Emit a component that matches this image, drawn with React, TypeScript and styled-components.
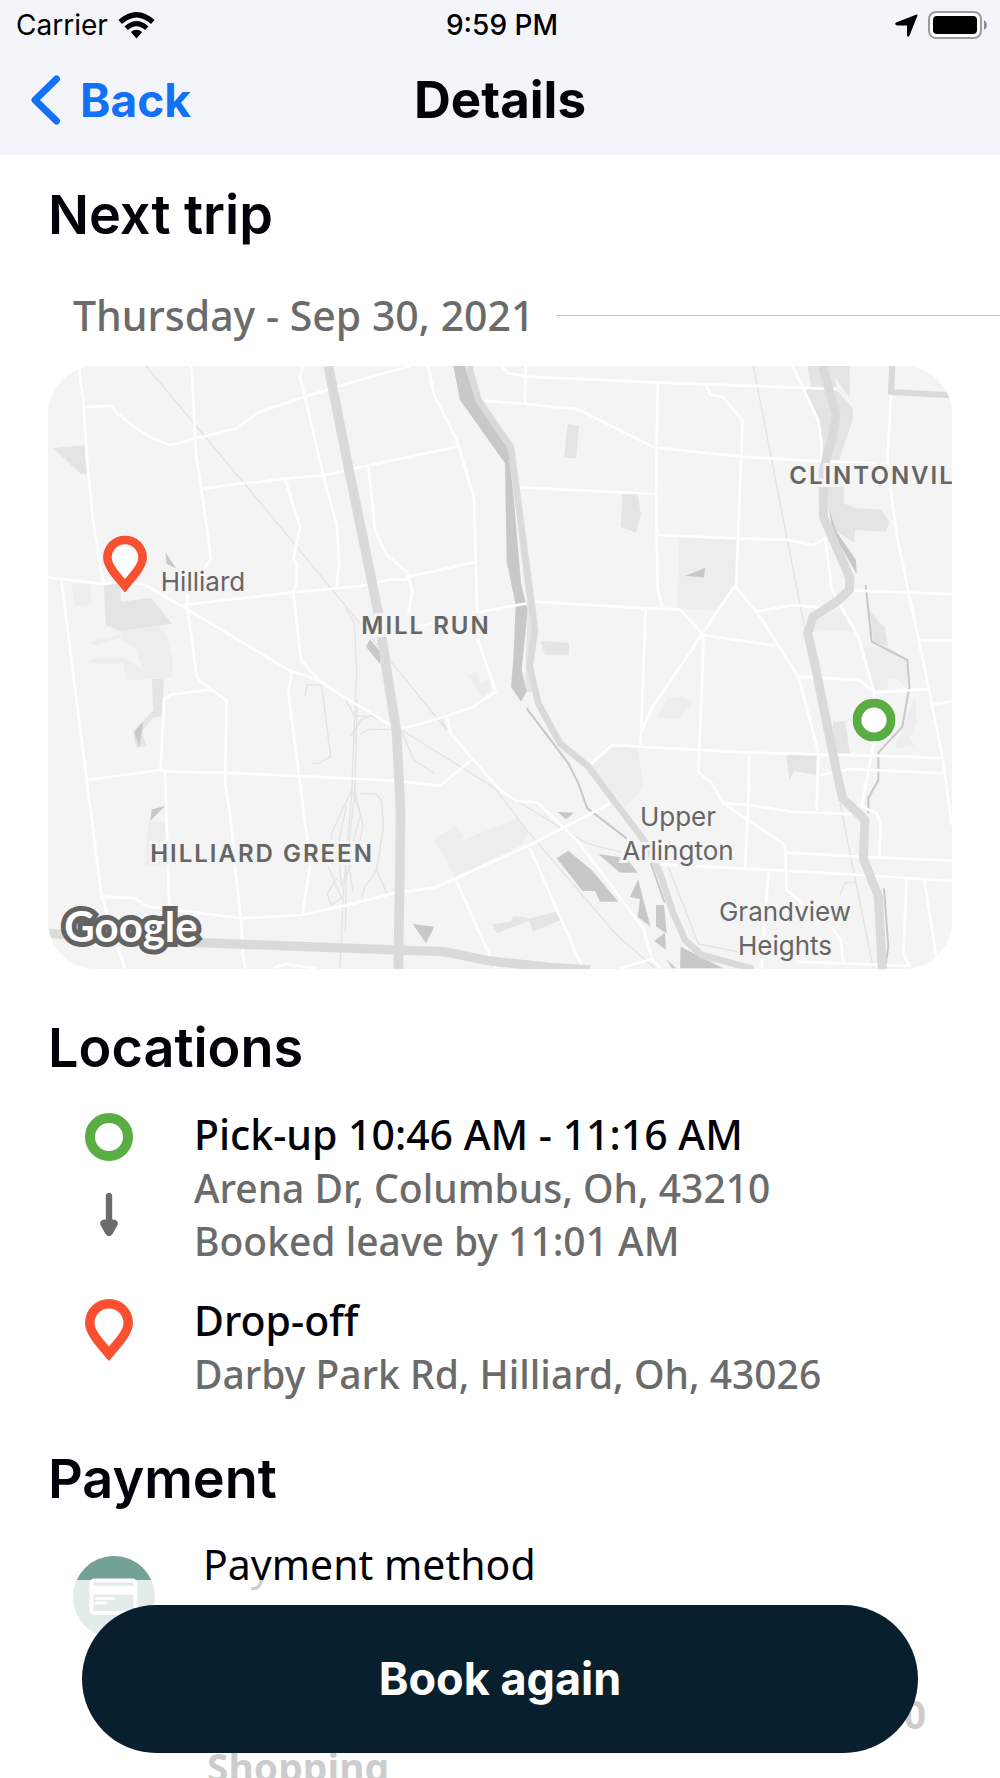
import React from "react";
import styled, { createGlobalStyle } from "styled-components";

const GlobalStyle = createGlobalStyle`
  * { box-sizing: border-box; }
  body { margin: 0; background: #fff; color: #020208; font-family: "Noto Sans", "Open Sans", sans-serif; }
  h1, h2, h3, p { margin: 0; }
`;

const system = `Inter, "Liberation Sans", sans-serif`;

const Screen = styled.div`
  position: relative;
  display: flex;
  flex-direction: column;
  height: 100vh;
  overflow: hidden;
`;

const TopBar = styled.header`
  flex: none;
  padding-bottom: 20px;
  background: #f4f5fb;
  font-family: ${system};
`;

const StatusBar = styled.div`
  display: grid;
  grid-template-columns: 1fr auto 1fr;
  align-items: center;
  height: 50px;
  padding: 0 12px 0 16px;
  color: #000;
  font-size: 28px;
`;

const StatusGroup = styled.div<{ $end?: boolean }>`
  display: flex;
  align-items: center;
  justify-content: ${(p) => (p.$end ? "flex-end" : "flex-start")};
  gap: 10px;
`;

const Clock = styled.time`
  font-weight: 500;
`;

const NavBar = styled.nav`
  display: grid;
  grid-template-columns: 1fr auto 1fr;
  align-items: center;
  height: 85px;
  padding: 14px 30px 0;
`;

const BackButton = styled.button`
  display: flex;
  align-items: center;
  justify-self: start;
  gap: 18px;
  padding: 0;
  border: 0;
  background: none;
  color: #1371f5;
  font: 700 46px/52px ${system};
`;

const Title = styled.h1`
  font-size: 51px;
  font-weight: 700;
  line-height: 52px;
`;

const Content = styled.main`
  flex: 1;
  min-height: 0;
  overflow-y: auto;
  scrollbar-width: none;
  padding: 26px 48px 0;
`;

const Section = styled.section`
  margin-bottom: 45px;
`;

const Heading = styled.h2`
  font: 600 54px/68px ${system};
`;

const DateRow = styled.div`
  display: flex;
  align-items: center;
  gap: 22px;
  margin: 36px -48px 21px 25px;
  color: #6b6b6b;
  font-size: 41px;
  font-weight: 500;
  line-height: 60px;
`;

const Rule = styled.hr`
  flex: 1;
  margin: 0;
  border: 0;
  border-top: 1px solid #c8c8c8;
`;

const MapCard = styled.div`
  position: relative;
  aspect-ratio: 904 / 603;
  overflow: hidden;
  border-radius: 48px;
  background: #f4f4f4;
`;

const MapDrawing = styled.svg`
  display: block;
  width: 100%;
  height: 100%;
`;

const MapPoint = styled.div<{ $x: number; $y: number }>`
  position: absolute;
  left: ${(p) => (p.$x / 904) * 100}%;
  top: ${(p) => (p.$y / 603) * 100}%;
  transform: translate(-50%, -50%);
  line-height: 0;
`;

const Place = styled(MapPoint)<{ $district?: boolean }>`
  color: #666;
  font-family: ${system};
  font-size: ${(p) => (p.$district ? 24 : 26)}px;
  font-weight: ${(p) => (p.$district ? 600 : 400)};
  letter-spacing: ${(p) => (p.$district ? 2 : 0)}px;
  line-height: 34px;
  text-align: center;
  white-space: nowrap;
  -webkit-text-stroke: 6px #f4f4f4;
  paint-order: stroke fill;
`;

const MapBrand = styled(MapPoint)`
  color: #fff;
  font: 700 42px/48px Lato, sans-serif;
  -webkit-text-stroke: 10px #636363;
  paint-order: stroke fill;
`;

const Stops = styled.ol`
  display: flex;
  flex-direction: column;
  gap: 27px;
  margin: 26px 0 0;
  padding: 0;
  list-style: none;
`;

const Stop = styled.li`
  display: grid;
  grid-template-columns: 48px 1fr;
  column-gap: 61px;
  padding-left: 37px;
`;

const StopIcons = styled.div`
  display: flex;
  flex-direction: column;
  align-items: center;
  gap: 32px;
  padding-top: 5px;
  line-height: 0;
`;

const StopTitle = styled.h3`
  font-size: 41px;
  font-weight: 500;
  line-height: 53px;
`;

const StopText = styled.p`
  color: #6b6b6b;
  font-size: 39px;
  font-weight: 500;
  line-height: 53px;
`;

const PaymentRow = styled.div`
  display: grid;
  grid-template-columns: 82px 1fr;
  column-gap: 48px;
  margin-top: 25px;
  padding: 0 26px 0 25px;
`;

const PaymentIcon = styled.svg`
  margin-top: 18px;
`;

const PaymentInfo = styled.div`
  font-size: 39px;
  line-height: 53px;
`;

const Method = styled.p`
  font-size: 41px;
`;

const Amount = styled.p`
  margin-top: 96px;
  font-weight: 700;
  text-align: right;
`;

const Purpose = styled.p`
  padding-left: 4px;
  font-weight: 700;
`;

const ActionBar = styled.footer`
  position: absolute;
  inset: auto 0 0;
  padding: 25px 82px;
  background: rgba(255, 255, 255, 0.8);
`;

const BookButton = styled.button`
  display: block;
  width: 100%;
  height: 148px;
  border: 0;
  border-radius: 74px;
  background: #081f2e;
  color: #fff;
  font: 700 45px/52px ${system};
`;

const WifiIcon = () => (
  <svg width="37" height="28" viewBox="0 0 37 28" aria-hidden="true">
    <path d="M0.500 9Q18.500-7 36.500 9L33 13Q18.500 0 4 13Z" />
    <path d="M6.500 15.500Q18.500 4.500 30.500 15.500L27 19Q18.500 11.500 10 19Z" />
    <path d="M12.800 21Q18.500 16.500 24.200 21L18.500 27.500Z" />
  </svg>
);

const LocationArrow = () => (
  <svg width="23" height="23" viewBox="0 0 23 23" aria-hidden="true">
    <path d="M1 8.500 21 .700Q23 0 22.300 2L14.500 21.500Q12.700 24 12 21.500V11.500H2Q-1 10.500 1 8.500Z" />
  </svg>
);

const BatteryIcon = () => (
  <svg width="60" height="28" viewBox="0 0 60 28" aria-hidden="true">
    <rect x="1" y="1" width="52" height="26" rx="7" fill="#fff" stroke="#9b9ba0" strokeWidth="2" />
    <rect x="5" y="5" width="44" height="18" rx="4" />
    <path d="M56 9Q59 11 59 14T56 19Z" fill="#8b8b90" />
  </svg>
);

const BackArrow = () => (
  <svg width="32" height="50" viewBox="0 0 32 50" fill="none" stroke="currentColor" strokeWidth="7" strokeLinecap="round" strokeLinejoin="round" aria-hidden="true">
    <path d="M26.500 4 5 25 26.500 46" />
  </svg>
);

const PickupMark = ({ size = 48 }: { size?: number }) => (
  <svg width={size} height={size} viewBox="0 0 48 48" aria-hidden="true">
    <circle cx="24" cy="24" r="19" fill="#fff" stroke="#5aad42" strokeWidth="10" />
  </svg>
);

const DropoffMark = ({ size = 48 }: { size?: number }) => (
  <svg width={size} height={(size * 62) / 48} viewBox="0 0 48 62" aria-hidden="true">
    <path d="M24 62C14 50 0 36 0 24a24 24 0 0 1 48 0C48 36 34 50 24 62Z" fill="#f85030" />
    <path d="M24 47.500C17 39 9.500 31 9.500 24a14.500 14.500 0 0 1 29 0C38.500 31 31 39 24 47.500Z" fill="#fff" />
  </svg>
);

const DownArrow = () => (
  <svg width="20" height="44" viewBox="0 0 20 44" fill="#6b6b6b" aria-hidden="true">
    <path d="M6.800 3a3.200 3.200 0 0 1 6.400 0V26.500H14C18.500 26.500 20 30 18 33L13.500 41Q10 45.500 6.500 41L2 33C0 30 1.500 26.500 6 26.500H6.800Z" />
  </svg>
);

const lightAreas = [
  "71,654 128,654 131,717 81,720",
  "126,827 216,807 216,817 141,840",
  "216,794 331,779 351,797 373,872 373,934 236,944 226,892 106,892 146,877 226,877",
  "301,1367 354,1370 356,1502 291,1497",
  "1894,512 2066,522 2064,665 2051,672 2011,734 1886,727",
  "2381,720 2416,797 2296,790 2311,762",
  "2446,844 2526,844 2576,882 2576,967 2546,937 2521,942 2516,972 2476,972",
  "2601,987 2606,1067 2586,1112 2599,1140 2541,1147 2571,1072",
  "1856,1000 1906,989 1933,1009 1896,1059 1826,1054",
  "1628,1197 1693,1142 1768,1144 1788,1262 1731,1322",
  "1156,1417 1224,1382 1246,1407 1231,1427 1411,1357 1441,1397 1421,1437 1221,1532",
  "1256,927 1286,917 1298,952 1324,939 1328,972 1303,994",
];

const parks = [
  "16,247 113,237 123,324 98,324",
  "168,657 216,652 219,707 309,696 373,774 216,794 173,777",
  "311,940 348,937 341,1052 316,1054 281,1097 296,1140 264,1145 256,1097 316,1032",
  "1559,175 1593,180 1584,276 1548,276",
  "1724,384 1769,384 1779,447 1763,500 1718,482",
  "1478,825 1563,830 1563,866 1491,866",
  "2278,0 2404,0 2406,97 2361,32 2366,72 2414,127 2416,157 2373,282 2321,282 2321,222 2311,164 2273,74 2291,62",
  "2336,362 2388,360 2388,412 2416,425 2499,432 2524,469 2514,497 2421,492 2419,530 2366,497 2341,422",
  "2464,732 2511,787 2521,844 2476,827",
  "2356,1069 2391,1065 2406,1162 2346,1162",
  "2214,1165 2306,1170 2304,1227 2238,1215 2224,1244",
  "1331,1675 1389,1667 1396,1649 1446,1657 1523,1637 1536,1662 1456,1697 1444,1664 1348,1702",
  "1406,452 1461,792 1446,912 1454,975 1430,980 1439,732",
];

const water = [
  "1216,0 1251,0 1281,97 1381,250 1396,382 1419,652 1439,732 1421,912 1436,977 1419,1007 1389,962 1396,882 1403,717 1376,587 1371,292 1236,102",
  "1526,1477 1561,1454 1631,1512 1711,1607 1656,1607 1641,1575 1604,1575",
  "1651,1464 1736,1477 1769,1520 1716,1520",
  "1771,1540 1786,1602 1808,1682 1769,1652 1776,1600 1746,1592",
  "1824,1617 1848,1617 1856,1702 1824,1682",
  "1851,1700 1854,1752 1819,1725",
  "1528,1337 1578,1340 1554,1360",
  "1094,1674 1159,1682 1134,1732",
  "1898,1742 1966,1777 2026,1807 1896,1807",
  "1856,1779 1884,1807 1871,1807",
  "966,820 1001,862 996,894 954,842",
  "352,559 384,607 356,594",
  "1911,630 1971,606 1968,634",
  "2341,422 2366,497 2424,582 2426,625 2356,502",
  "286,1067 274,1142 258,1097",
  "311,1330 352,1320 306,1365",
];

const streams = [
  "1436,1027 1561,1192 1590,1250 1618,1327 1736,1417",
  "2453,657 2471,827 2578,882 2584,962 2563,1082 2491,1160 2491,1242 2461,1297 2461,1342",
  "2508,1567 2521,1742 2511,1807",
  "1808,1490 1850,1610",
];

const rails = [
  "294,0 676,457 926,760 1196,1092",
  "891,722 919,772 926,912 921,1030 911,1282 886,1582 876,1807",
  "928,1000 920,1282 895,1500 892,1700",
  "1061,1092 1341,1267 1436,1392 1706,1707 1821,1807",
  "1361,1277 1616,1432 1721,1459",
  "2116,0 2271,792",
  "2376,1312 2476,1807",
  "1861,1502 1951,1734 2076,1759",
  "2376,1587 2392,1549 2424,1549",
  "771,992 776,957 821,957 848,1172 811,1192 791,1192",
  "851,1422 851,1402 911,1272 938,1345 900,1480 915,1580",
  "841,1502 881,1597 848,1617 838,1582 866,1537",
  "895,1320 870,1440 880,1560 930,1450 945,1380 920,1270",
  "936,1282 986,1284 1001,1307 1006,1382 986,1512 951,1562 941,1597",
  "986,1512 1016,1582",
  "891,1000 921,1050 966,1050 1006,1062",
  "936,1102 966,1090 1026,1090",
  "908,1112 940,1060 970,1050",
  "1061,1092 1096,1182 1161,1222",
  "1196,1092 1180,1060",
];

const roads = [
  "94,0 98,52 106,102 116,272 136,472 166,654",
  "106,124 188,119 211,145 251,177 309,215 368,237 444,217 566,187 631,139 771,92 906,50 1086,0",
  "431,0 438,142 444,267 466,412 489,579 471,604",
  "461,369 581,352 631,349 716,337 821,329 891,315 921,307 1228,242",
  "764,0 756,37 771,92 826,329 866,477 873,587 866,662",
  "711,339 756,482 736,579 746,592 746,647 736,679 759,882 811,940",
  "0,634 166,654 231,647 286,654 396,717 418,730 721,912 806,940 906,1004 1036,1082",
  "406,717 736,679 936,660 1036,639 1071,642 1090,630 1278,589",
  "41,647 74,912 116,1242 161,1592 195,1700 231,1807",
  "418,685 418,730 444,912 444,927 461,950 536,1004 531,1247 548,1362 561,1502 579,1657 583,1752 591,1807",
  "491,970 371,985 348,1000 338,1212",
  "116,1242 338,1212 351,1217 526,1220 751,1230 936,1239 1036,1244 1176,1259 1274,1179",
  "351,1217 364,1627",
  "731,915 721,980 778,1422 786,1502 763,1647",
  "161,1592 256,1596 301,1622 426,1637 579,1657 763,1647 906,1615 1036,1582 1161,1565 1446,1437 1686,1312",
  "676,1807 711,1794 806,1807",
  "1141,0 1158,87 1228,227 1278,397 1283,589 1291,827 1321,912 1343,977 1276,1022 1196,1050 1061,1090",
  "961,302 981,492 1016,567 1076,617 1093,672 1081,747",
  "1111,782 1231,750 1436,712",
  "1361,0 1381,22 1436,32 1836,50 2366,69",
  "1433,0 1431,112",
  "1306,104 1436,114 1591,130 1821,245 2081,272 2316,286 2526,294",
  "1416,364 1821,384",
  "1829,52 1824,384 1829,667 1843,724",
  "1829,507 2071,517 2221,522 2296,538 2331,517",
  "1461,707 1796,727 1896,730 1966,807 2181,839",
  "1793,730 1786,912 1778,1137",
  "1974,57 1988,87 2024,92 2084,164 2064,665",
  "2234,0 2311,164 2321,232 2318,286",
  "2529,82 2518,292 2546,507 2631,912 2684,1177 2711,1377",
  "2416,674 2711,684",
  "1778,1102 1811,1027 1906,888 2056,665 2064,665 2126,737 2251,932 2311,1157 2306,1332",
  "1966,807 1964,912 1951,1217 1991,1252 2026,1312 2211,1437 2216,1572 2266,1614",
  "2126,737 2236,717 2316,724",
  "2331,512 2351,667 2376,717 2431,812 2478,977 2478,1127 2441,1322 2486,1342 2498,1372 2494,1472",
  "2616,824 2711,824",
  "2251,932 2434,942 2481,979 2641,969",
  "2656,1014 2711,1007",
  "1626,1197 1693,1137 1866,1147 2106,1160 2316,1165 2576,1172 2684,1177",
  "2316,1227 2406,1209 2686,1222",
  "2104,1162 2101,1312 2091,1504",
  "2026,1312 2101,1316 2226,1337 2411,1344",
  "2211,1459 2431,1472 2711,1484",
  "1836,1494 1936,1500 2211,1514 2436,1527 2711,1545",
  "2161,1517 2141,1807",
  "2576,1537 2566,1767 2586,1802",
  "2629,1542 2666,1777",
  "2246,1787 2586,1800",
  "2346,1677 2378,1722 2386,1792",
  "1196,1050 1206,1100 1356,1272 1406,1305 1468,1309 1586,1422 1786,1687 1811,1777 1836,1807",
  "1446,1447 1601,1800",
  "1221,1537 1343,1807",
  "1716,1807 1811,1779",
];

const highways = [
  { width: 29, points: "841,0 906,327 991,742 1016,912 1046,1102 1058,1342 1051,1809" },
  { width: 20, points: "1263,0 1291,102 1389,244 1461,792 1445,900 1471,1012 1536,1132 1621,1202 1791,1427 1836,1522 1876,1642 1911,1722 1961,1767 2116,1809" },
  { width: 27, points: "2324,0 2364,147 2351,222 2326,312 2326,452 2406,637 2404,672 2366,707 2296,752 2279,802 2298,882 2371,1242 2384,1297 2451,1362 2446,1477 2491,1592 2503,1809" },
  { width: 28, points: "0,1702 376,1727 936,1748 1186,1757 1326,1785 1506,1804 1626,1812" },
  { width: 18, points: "2533,0 2529,78 2710,88" },
];

const Streets = () => (
  <MapDrawing viewBox="0 0 2712 1809" preserveAspectRatio="xMidYMid slice" role="img" aria-label="Trip map">
    <g fill="#ededed">{lightAreas.map((p) => <polygon key={p} points={p} />)}</g>
    <polygon fill="#f4f4f4" points="206,815 261,847 286,912 311,925 276,905 232,877 150,870" />
    <g fill="#e4e4e4">{parks.map((p) => <polygon key={p} points={p} />)}</g>
    <g fill="#c8c8c8">{water.map((p) => <polygon key={p} points={p} />)}</g>
    <g fill="none" stroke="#c8c8c8" strokeWidth="6">{streams.map((p) => <polyline key={p} points={p} />)}</g>
    <g fill="none" stroke="#e3e3e3" strokeWidth="4">{rails.map((p) => <polyline key={p} points={p} />)}</g>
    <g fill="none" stroke="#fff" strokeWidth="8" strokeLinejoin="round">{roads.map((p) => <polyline key={p} points={p} />)}</g>
    <g fill="none" stroke="#dadada" strokeLinejoin="round">
      {highways.map((h) => <polyline key={h.points} points={h.points} strokeWidth={h.width} />)}
    </g>
  </MapDrawing>
);

export default function App() {
  return (
    <Screen>
      <GlobalStyle />
      <TopBar>
        <StatusBar>
          <StatusGroup>
            <span>Carrier</span>
            <WifiIcon />
          </StatusGroup>
          <Clock>9:59 PM</Clock>
          <StatusGroup $end>
            <LocationArrow />
            <BatteryIcon />
          </StatusGroup>
        </StatusBar>
        <NavBar>
          <BackButton type="button">
            <BackArrow />
            Back
          </BackButton>
          <Title>Details</Title>
        </NavBar>
      </TopBar>

      <Content>
        <Section>
          <Heading>Next trip</Heading>
          <DateRow>
            <span>Thursday - Sep 30, 2021</span>
            <Rule />
          </DateRow>
          <MapCard>
            <Streets />
            <Place $x={155} $y={216}>Hilliard</Place>
            <Place $x={378} $y={260} $district>MILL RUN</Place>
            <Place $x={824} $y={110} $district>CLINTONVIL</Place>
            <Place $x={214} $y={488} $district>HILLIARD GREEN</Place>
            <Place $x={630} $y={468}>Upper<br />Arlington</Place>
            <Place $x={737} $y={563}>Grandview<br />Heights</Place>
            <MapBrand $x={83} $y={560}>Google</MapBrand>
            <MapPoint $x={77} $y={198}><DropoffMark size={44} /></MapPoint>
            <MapPoint $x={826} $y={354}><PickupMark size={43} /></MapPoint>
          </MapCard>
        </Section>

        <Section>
          <Heading>Locations</Heading>
          <Stops>
            <Stop>
              <StopIcons>
                <PickupMark />
                <DownArrow />
              </StopIcons>
              <div>
                <StopTitle>Pick-up 10:46 AM - 11:16 AM</StopTitle>
                <StopText>Arena Dr, Columbus, Oh, 43210</StopText>
                <StopText>Booked leave by 11:01 AM</StopText>
              </div>
            </Stop>
            <Stop>
              <StopIcons>
                <DropoffMark />
              </StopIcons>
              <div>
                <StopTitle>Drop-off</StopTitle>
                <StopText>Darby Park Rd, Hilliard, Oh, 43026</StopText>
              </div>
            </Stop>
          </Stops>
        </Section>

        <Section>
          <Heading>Payment</Heading>
          <PaymentRow>
            <PaymentIcon width="82" height="82" viewBox="0 0 82 82" aria-hidden="true">
              <circle cx="41" cy="41" r="41" fill="#73a196" />
              <rect x="18.500" y="24.500" width="44" height="32.500" rx="3" fill="none" stroke="#fff" strokeWidth="4" />
              <path d="M18 30H63V38.500H18Z" fill="#fff" />
              <path d="M23.500 42.500H41M23.500 47H33" stroke="#fff" strokeWidth="3" strokeLinecap="round" />
            </PaymentIcon>
            <PaymentInfo>
              <Method>Payment method</Method>
              <Amount>0</Amount>
              <Purpose>Shopping</Purpose>
            </PaymentInfo>
          </PaymentRow>
        </Section>
      </Content>

      <ActionBar>
        <BookButton type="button">Book again</BookButton>
      </ActionBar>
    </Screen>
  );
}
